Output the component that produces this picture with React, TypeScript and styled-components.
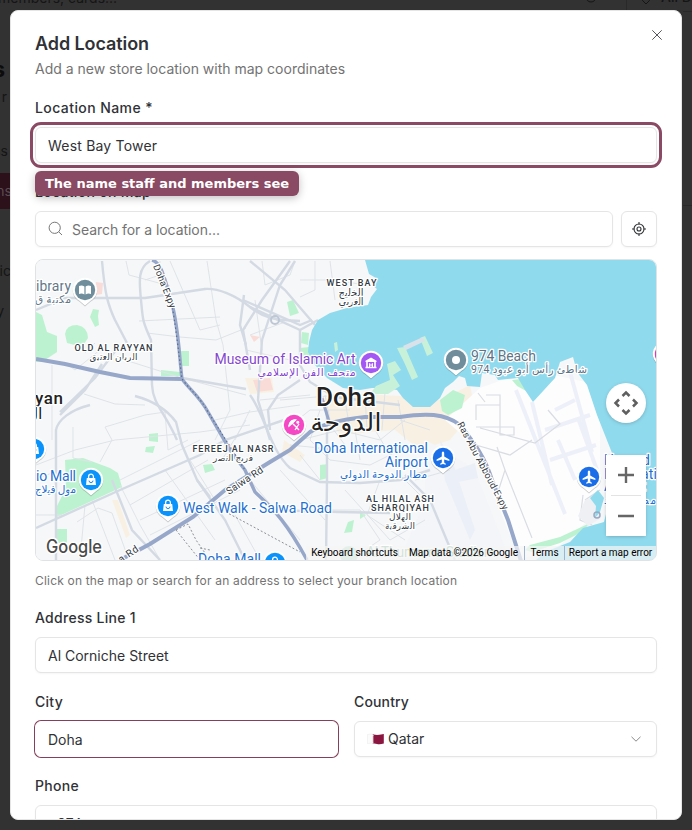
import React from "react";
import styled, { createGlobalStyle, css } from "styled-components";

const GlobalStyle = createGlobalStyle`
  *, *::before, *::after { box-sizing: border-box; }
  body {
    margin: 0;
    overflow: hidden;
    background: #323232;
    color: #303236;
    font-family: Inter, "Noto Sans", sans-serif;
    font-size: 14px;
  }
  input, button { font: inherit; color: inherit; }
`;

const Screen = styled.div`
  position: relative;
  height: 830px;
  padding: 10px;
  overflow: hidden;
`;

const Behind = styled.svg`
  position: absolute;
  inset: 0;
  width: 692px;
  height: 830px;
`;

const Dialog = styled.div`
  position: relative;
  height: 810px;
  padding: 20px 24px 0;
  border: 1px solid #e5e5e5;
  border-radius: 8px;
  background: #fff;
  overflow: hidden;
`;

const CloseButton = styled.button`
  position: absolute;
  top: 16px;
  right: 16px;
  display: flex;
  padding: 0;
  border: 0;
  background: none;
`;

const Title = styled.h2`
  margin: 0;
  font-size: 18px;
  line-height: 25px;
  font-weight: 600;
  letter-spacing: -0.08px;
`;

const Description = styled.p`
  margin: 3px 0 16px;
  line-height: 20px;
  color: #737373;
`;

const Form = styled.div`
  display: flex;
  flex-direction: column;
  gap: 16px;
`;

const Field = styled.div`
  position: relative;
  display: flex;
  flex-direction: column;
  gap: 8px;
`;

const Label = styled.label<{ $spacing?: number }>`
  height: 24px;
  line-height: 25px;
  font-weight: 500;
  letter-spacing: ${(p) => p.$spacing ?? 0.28}px;
`;

const box = css`
  height: 36px;
  border: 1px solid #e5e5e5;
  border-radius: 6px;
  background: #fff;
  box-shadow: 0 1px 2px rgba(0, 0, 0, 0.04);
`;

const TextInput = styled.input<{ $state?: "highlight" | "focus" }>`
  ${box}
  width: 100%;
  padding: 0 12px;
  outline: none;
  ${(p) => p.$state === "highlight" && css`outline: 3px solid #8a4a63; outline-offset: 2px; letter-spacing: 0.2px;`}
  ${(p) => p.$state === "focus" && css`border-color: #fff; box-shadow: 0 0 0 1px #84405a;`}
`;

const Tip = styled.div`
  position: absolute;
  z-index: 2;
  top: 76px;
  left: 0;
  padding: 0 10px;
  border-radius: 6px;
  background: #8a4a63;
  color: #fff;
  font: 600 13px/25px "DejaVu Sans", sans-serif;
  white-space: nowrap;
  box-shadow: 0 2px 8px rgba(0, 0, 0, 0.25);
`;

const SearchRow = styled.div`
  display: flex;
  gap: 8px;
`;

const SearchBox = styled.div`
  ${box}
  flex: 1;
  display: flex;
  align-items: center;
  gap: 8px;
  padding: 0 12px;
  color: #737373;
  letter-spacing: -0.05px;
`;

const IconButton = styled.button`
  ${box}
  display: flex;
  align-items: center;
  justify-content: center;
  width: 36px;
  padding: 0;
`;

const MapFrame = styled.div`
  position: relative;
  height: 302px;
  margin-top: 4px;
  border: 1px solid #e0e3e5;
  border-radius: 8px;
  overflow: hidden;
`;

const MapDrawing = styled.svg`
  display: block;
  width: 620px;
  height: 300px;
`;

const MapFooter = styled.div`
  position: absolute;
  right: 0;
  bottom: 0;
  display: flex;
  height: 14px;
  font: 10px/14px Roboto, sans-serif;
  color: #000;
  background: rgba(245, 245, 245, 0.72);
`;

const FooterItem = styled.span<{ $w: number }>`
  width: ${(p) => p.$w}px;
  text-align: center;
  white-space: nowrap;
  & + & + & { border-left: 1px solid #9fb4d0; }
`;

const PanButton = styled.div`
  position: absolute;
  top: 123px;
  right: 10px;
  width: 40px;
  height: 40px;
  border-radius: 50%;
  background: #fff;
  box-shadow: 0 1px 4px -1px rgba(0, 0, 0, 0.3);
`;

const ZoomControl = styled.div`
  position: absolute;
  top: 195px;
  right: 10px;
  width: 40px;
  height: 81px;
  background: #fff;
  box-shadow: 0 1px 4px -1px rgba(0, 0, 0, 0.3);
`;

const Hint = styled.p`
  margin: -5px 0 -1px;
  font-size: 12px;
  line-height: 18px;
  letter-spacing: 0.185px;
  color: #737373;
`;

const Columns = styled.div`
  display: grid;
  grid-template-columns: 1fr 1fr;
  gap: 16px;
`;

const Select = styled.div`
  ${box}
  display: flex;
  align-items: center;
  gap: 4px;
  padding: 0 12px 1px;
  svg:last-child { margin-left: auto; }
`;

type P = { x: number; y: number };

const Pin = ({ x, y, color, children }: P & { color: string; children?: React.ReactNode }) => (
  <g transform={`translate(${x} ${y})`}>
    <path d="M0 15.5 L-5.5 10.8 A12.2 12.2 0 1 1 5.5 10.8 Z" fill="#0003" transform="translate(0 1)" />
    <path d="M0 15.5 L-5.5 10.8 A12.2 12.2 0 1 1 5.5 10.8 Z" fill="#fff" />
    <circle r="10.2" fill={color} />
    {children}
  </g>
);

const Bag = () => (
  <g>
    <path d="M-4.2-2H4.2L5 5H-5Z" fill="#fff" />
    <path d="M-2.4-2V-3.4A2.4 2.4 0 0 1 2.4-3.4V-2" fill="none" stroke="#fff" strokeWidth="1.3" />
    <path d="M-2 .6A2 2 0 0 0 2 .6" fill="none" stroke="#0a8cf0" strokeWidth="1" />
  </g>
);

const Plane = () => (
  <path d="M0-6.5C.8-6.5 1.2-5.7 1.2-4.8V-1.6L6.4 1.5V3L1.2 1.5V4.4L2.8 5.7V6.7L0 5.9L-2.8 6.7V5.7L-1.2 4.4V1.5L-6.4 3V1.5L-1.2-1.6V-4.8C-1.2-5.7-.8-6.5 0-6.5Z" fill="#fff" />
);

type MapTextProps = P & {
  size: number; w?: number; children: string;
  fill?: string; anchor?: "start" | "middle" | "end"; weight?: number; halo?: number; turn?: number;
};

const MapText = ({ x, y, size, w, children, fill = "#333a44", anchor = "start", weight = 400, halo = 2.5, turn = 0 }: MapTextProps) => (
  <text
    x={x} y={y} fontSize={size} textLength={w} fill={fill} textAnchor={anchor} fontWeight={weight}
    stroke="#fff" strokeWidth={halo} strokeLinejoin="round" paintOrder="stroke"
    transform={turn ? `rotate(${turn} ${x} ${y})` : undefined}
  >
    {children}
  </text>
);

const minorRoads = [
  "M126 261L129 275L170 286", "M170 261L200 330L220 325", "M207 261L216 320L223 345L230 410L215 440",
  "M139 321L220 317", "M147 333L180 337L216 340L246 328", "M160 261V275L145 280", "M52 365V440", "M84 394L115 404L145 405",
  "M95 343L85 353M100 350L75 370L64 362", "M125 360L182 378L246 395", "M36 465L75 450L115 440L200 432L250 425",
  "M36 479L60 470M73 427V458L92 462M105 427L145 415L165 412L168 450L188 440", "M105 427L112 440L100 462",
  "M85 505L80 560M92 500L115 560M36 515H62M77 522L98 508L112 513L127 555", "M120 480L200 440M130 505L208 460M140 520L225 480M150 535L240 490",
  "M165 470L190 505L215 540M190 460L215 500M120 485L140 525L160 560", "M235 515L260 560M250 480L300 540M280 470L325 520",
  "M222 460L240 430L246 420M235 440L250 410M215 420L250 412L300 405", "M246 350L290 360M250 335L285 322M255 300L262 350M262 261L265 285L290 275L295 261",
  "M315 261V290L300 297M330 261L335 300M300 280H335L365 285", "M325 395L330 420M280 400L340 395M310 410L350 410M300 440L340 430L380 440L405 420",
  "M345 400L350 430M365 395L367 430M385 392L382 430M398 400L405 440", "M320 410L310 440L330 460L370 465L400 450",
  "M330 425L345 445M355 430L360 460M375 430L390 455M400 420L430 430", "M325 510H360L380 540L350 560M380 480L367 515L405 540M345 490L390 540L425 520",
  "M415 480L450 470M400 475L420 495", "M290 445L340 450M300 455L320 480M285 430L310 410M260 400L310 395",
];

const streets = [
  "M36 310L65 298L145 298L205 289C218 288 235 295 250 307S275 320 300 321",
  "M102 261C105 295 108 305 115 320L127 343", "M102 364L85 390L60 415M116 350L95 378L60 412",
  "M150 261C138 268 139 280 141 300S142 320 151 340L152 385C153 405 165 412 177 440", "M56 560V430C58 420 70 410 90 405",
  "M135 396C150 400 165 407 176 422L182 445L197 480L210 497", "M250 261L285 290L315 325", "M290 261L262 300L243 330L250 370",
  "M295 261L280 285L262 340", "M243 300L300 325L312 320", "M244 295L240 325L246 345", "M262 340L258 400L270 440",
  "M250 307L300 330L318 320", "M300 330L300 365L310 382L335 397L400 405", "M300 380L278 395L268 410L270 430",
  "M327 410V480L326 560", "M182 378L246 389M250 395C265 415 270 450 290 468L320 482L360 483L400 480L430 470",
  "M270 510L340 512L390 513", "M36 528L120 490L200 455L225 440L290 418", "M112 480L132 530L160 560M197 480L225 520L245 560",
  "M405 475L430 500L455 560",
];

const Sea = () => (
  <path
    fill="#90daee"
    d="M365 260L369 274L376 278L373 286L377 289L371 297L368 305L347 308L330 313L318 320L312 330L309 342L308 352L315 365L327 378L343 388L360 390L372 388L387 388L397 390L403 398L413 407L430 407L440 398L445 388L453 382L459 376L465 378L467 386L480 387L482 373L495 375L498 380L518 378L525 390L533 402L555 378L560 362L573 357L577 372L587 385L597 415L612 453L620 480L616 500L607 510L604 522L583 528L570 542L545 552L535 561H657V260Z"
  />
);

const CityMap = () => (
  <MapDrawing viewBox="36 260 620 300" fontFamily='Roboto, "Noto Sans", "DejaVu Sans", sans-serif'>
    <rect x="36" y="260" width="620" height="300" fill="#f6f7f8" />
    <g fill="#f8f1e3">
      <path d="M318 400L345 393L400 396L440 400L470 385L475 410L450 440L420 450L395 430L340 435Z" />
      <path d="M245 378H272L274 392L250 394ZM284 440L305 455L300 462L282 452ZM112 500L118 500L130 535L126 538Z" />
    </g>
    <path d="M445 420L480 388L530 370L600 385V510L560 545L520 560L500 510L480 450Z" fill="#fdfdfe" />
    <path d="M425 440L445 450L475 470L510 560H400L425 500Z" fill="#f3f5f8" />
    <path d="M455 470L475 463L478 478L458 482ZM440 440L452 460L475 530L470 540L445 480Z" fill="#e9edf6" opacity=".8" />
    <g fill="#bdf2d0">
      <path d="M36 312L42 315L47 332L57 336V352L42 362H36ZM93 309L99 310L98 316L99 325L95 327L90 317Z" />
      <path d="M65 334Q66 325 77 325Q88 327 88 338L84 344L75 345L67 343ZM180 351H189V366H181ZM161 370L180 372V376H161Z" />
      <path d="M65 460L83 458L110 468L118 473L122 487L57 517L56 508L66 488ZM57 529H67V543H57ZM149 434L158 433V442L149 441ZM146 447L155 446L153 453L145 452ZM203 465L212 464L215 470L205 473Z" />
      <path d="M287 302L293 300L299 313L290 316ZM302 332L309 333L308 345L301 343ZM300 348L309 347L312 360L300 362ZM320 465L328 464V478L320 480ZM348 522L354 520L352 532L344 533ZM360 512L366 515L360 519Z" />
      <path d="M440 400L453 390L465 395L462 408L448 415L442 411ZM512 380L520 379L528 392L517 386ZM530 545L560 537L590 523L582 532L560 543L532 552L525 550Z" />
    </g>
    <path d="M253 380L270 378L273 390L257 392ZM96 282L103 283L102 294L95 295ZM250 335L260 337L254 342Z" fill="#f9dcd8" />
    <g stroke="#dfe3e8" strokeWidth="1" fill="none">{minorRoads.map((d) => <path key={d} d={d} />)}</g>
    <g stroke="#d3dae3" strokeWidth="2.4" fill="none">{streets.map((d) => <path key={d} d={d} />)}</g>
    <Sea />
    <g fill="#c8f1da">
      <path d="M334 343L337 342L338 350L335 352ZM397 348L405 347L418 377L412 380L404 362ZM420 338L425 336L433 353L427 356ZM387 364L395 361L401 370L393 375L400 386L388 394H370L376 386L390 380Z" />
      <path d="M403 346L423 337L425 341L406 350Z" fill="#d9e2e9" />
    </g>
    <g fill="none" stroke="#eef0f9" strokeWidth="4">
      <path d="M516 390L565 514M532 402L552 485M570 372L592 452M555 410L575 400M545 430L590 415M550 460L596 445M558 440L575 480M578 418L597 470" />
    </g>
    <g fill="none" stroke="#d9dce2" strokeWidth="1.2">
      <path d="M480 428L535 443L560 424L548 410M500 405V435H514V427H476M486 395H500V405H476V420M476 445L510 455L532 440M505 470L532 538M497 447L505 470L498 492M478 393L485 402M583 495L580 520L592 525M585 500L600 490" />
    </g>
    <path d="M585 500L596 496L601 518L588 526L578 516Z" fill="#eef0f4" />
    <path d="M590 498L596 506L595 518L600 512L604 498L598 490Z" fill="#90daee" />
    <circle cx="597" cy="515" r="3" fill="none" stroke="#9aa8c0" strokeWidth="1.5" />

    <g fill="none" stroke="#97a7c9" strokeWidth="4">
      <path d="M36 359L65 364L100 372L130 378L182 379" />
      <path d="M152 260C160 262 163 272 171 300S179 355 182 379C190 390 200 397 208 412L230 450L245 470L255 492C275 510 288 525 307 560" strokeWidth="3.4" />
      <path d="M120 560L150 544L193 517L225 490L270 462L290 450L310 432C325 423 340 420 365 417L400 417C425 413 445 413 460 425C474 443 484 455 492 480L508 520L521 561" />
      <path d="M322 398L330 425" strokeWidth="3" />
    </g>
    <path d="M171 300C175 320 179 355 182 379C190 390 200 397 208 412L245 470" fill="none" stroke="#5c6f91" strokeWidth="1.2" strokeDasharray="1.5 2.5" />
    <path d="M176 530L188 524L196 540L205 553M176 530L200 560M222 510L250 525L300 552M200 548L210 550" fill="none" stroke="#8b8f96" strokeDasharray="2 2" />
    <circle cx="275" cy="320" r="4" fill="none" stroke="#bdc7d5" strokeWidth="2" />

    <MapText x={71} y={291} size={14} w={35} anchor="end" fill="#5f7889">ibrary</MapText>
    <MapText x={71} y={303} size={10.5} w={36} anchor="end" fill="#5f7889">مكتبة ق</MapText>
    <MapText x={153} y={266} size={9.5} w={46} turn={68}>Doha Expy</MapText>
    <MapText x={351.5} y={286} size={9} w={50} anchor="middle" weight={500}>WEST BAY</MapText>
    <MapText x={351} y={296} size={10} w={25} anchor="middle">الخليج</MapText>
    <MapText x={351} y={305} size={10} w={25} anchor="middle">الغربي</MapText>
    <MapText x={113.5} y={351} size={9} w={78} anchor="middle" weight={500}>OLD AL RAYYAN</MapText>
    <MapText x={113.5} y={360} size={9} w={48} anchor="middle">الريان العتيق</MapText>
    <MapText x={355.5} y={364} size={14} w={141} anchor="end" fill="#8546d0">Museum of Islamic Art</MapText>
    <MapText x={355.5} y={376} size={10.5} w={98} anchor="end" fill="#8546d0">متحف الفن الإسلامي</MapText>
    <MapText x={471} y={361} size={14} w={65} fill="#5c7587">974 Beach</MapText>
    <MapText x={471} y={373} size={10.5} w={116} fill="#5c7587">شاطئ رأس أبو عبود 974</MapText>
    <MapText x={35} y={404} size={17} w={28} weight={500} fill="#222">yan</MapText>
    <MapText x={42.5} y={419} size={16} anchor="end" fill="#222">ال</MapText>
    <MapText x={346} y={406} size={26} w={60} anchor="middle" weight={500} fill="#222">Doha</MapText>
    <MapText x={346} y={431} size={25} w={71} anchor="middle" fill="#222">الدوحة</MapText>
    <MapText x={428} y={453} size={14} w={114} anchor="end" fill="#1f70d0">Doha International</MapText>
    <MapText x={428} y={467} size={14} w={43} anchor="end" fill="#1f70d0">Airport</MapText>
    <MapText x={427} y={478} size={10.5} w={87} anchor="end" fill="#1f70d0">مطار الدوحة الدولي</MapText>
    <MapText x={233} y={452} size={9} w={81} anchor="middle" weight={500}>FEREEJ AL NASR</MapText>
    <MapText x={233} y={461} size={9} w={40} anchor="middle">فريج النصر</MapText>
    <MapText x={76} y={481} size={14} w={40} anchor="end" fill="#1f70d0">io Mall</MapText>
    <MapText x={76} y={493} size={10.5} w={41} anchor="end" fill="#1f70d0">مول فيلاج</MapText>
    <MapText x={229} y={495} size={10} w={42} turn={-34}>Salwa Rd</MapText>
    <MapText x={121} y={563} size={10} w={22} turn={-34}>a Rd</MapText>
    <MapText x={183} y={513} size={14} w={149} fill="#1f70d0">West Walk - Salwa Road</MapText>
    <MapText x={400} y={502} size={9} w={68} anchor="middle" weight={500}>AL HILAL ASH</MapText>
    <MapText x={400} y={511} size={9} w={58} anchor="middle" weight={500}>SHARQIYAH</MapText>
    <MapText x={400} y={520} size={9} w={22} anchor="middle">الهلال</MapText>
    <MapText x={400} y={529} size={9} w={30} anchor="middle">الشرقية</MapText>
    <MapText x={457} y={424} size={9.5} w={98} turn={62}>Ras Abu Abboud Expy</MapText>
    <MapText x={198} y={564} size={14} w={63} fill="#1f70d0">Doha Mall</MapText>
    <MapText x={604} y={465} size={14} w={46} fill="#1f70d0">Hamad</MapText>
    <MapText x={604} y={479} size={14} w={61} fill="#1f70d0">Internatio</MapText>
    <MapText x={604} y={491} size={14} w={42} fill="#1f70d0">Airport</MapText>
    <MapText x={656} y={504} size={10.5} w={52} anchor="end" fill="#1f70d0">مطار حمد</MapText>
    <MapText x={366} y={557} size={14} w={130} fill="#7fb396">Al Thumama Stadium</MapText>

    <Pin x={85} y={290} color="#6f8d9b">
      <path d="M-.6-3.5Q-3-5-6-4V4Q-3 3-.6 4.5ZM.6-3.5Q3-5 6-4V4Q3 3 .6 4.5Z" fill="#fff" />
    </Pin>
    <Pin x={371} y={363} color="#a357f3">
      <path d="M-5.5-2.3L0-5.5L5.5-2.3V-1H-5.5ZM-4.8-1H-3.2V4H-4.8ZM3.2-1H4.8V4H3.2ZM-5.5 3.8H5.5V5.2H-5.5ZM-2 .2H-.8V1.4H.8V.2H2V3.8H.8V2.6H-.8V3.8H-2Z" fill="#fff" />
    </Pin>
    <Pin x={456} y={360} color="#6f8d9b"><circle r="4" fill="#fff" /></Pin>
    <Pin x={294} y={425} color="#f548c4">
      <g fill="none" stroke="#fff" strokeWidth="1.3">
        <path d="M-5 1A6 6 0 0 1 1.5-5L-5 1ZM-1.8-2L5 5M1 5L5-1" />
        <path d="M-5.2 1L-2.5-4L1.5-5.2Z" fill="#fff" />
        <circle cx="3.8" cy="-2.8" r=".9" fill="#fff" />
      </g>
    </Pin>
    <Pin x={443} y={458} color="#1a6ee8"><Plane /></Pin>
    <Pin x={589} y={477} color="#1a6ee8"><Plane /></Pin>
    <Pin x={91} y={480} color="#0a93fb"><Bag /></Pin>
    <Pin x={168} y={506} color="#0a93fb"><Bag /></Pin>
    <Pin x={34} y={449} color="#0a93fb"><Bag /></Pin>
    <Pin x={275} y={563} color="#0a93fb"><Bag /></Pin>
    <Pin x={665} y={354} color="#d93bb2" />
    <circle cx="349" cy="555" r="9" fill="#a5d6bc" opacity=".75" />
    <text x="46" y="553" fontSize="18" fontFamily="Inter, sans-serif" textLength="56" lengthAdjust="spacingAndGlyphs" fill="#4a4a4a" stroke="#fff" strokeWidth="3" paintOrder="stroke" fontWeight="500">Google</text>
  </MapDrawing>
);

const Search = () => (
  <svg width="16" height="16" viewBox="0 0 16 16" fill="none" stroke="#777">
    <circle cx="6.7" cy="6.8" r="5.6" /><path d="M10.7 10.8L14 14" />
  </svg>
);

const Target = () => (
  <svg width="16" height="16" viewBox="0 0 16 16" fill="none" stroke="#303236" strokeWidth="1.1">
    <circle cx="8" cy="8" r="5" /><circle cx="8" cy="8" r="2" />
    <path d="M8 1V3.5M8 12.5V15M1 8H3.5M12.5 8H15" />
  </svg>
);

const Flag = () => (
  <svg width="17" height="12" viewBox="0 0 17 12">
    <path d="M.5 1.5Q4 .5 7 1.5T16.5 1V10.5Q12 11.5 8 10.5T.5 10.8Z" fill="#fbfbfb" stroke="#e9e9e9" strokeWidth=".5" />
    <path d="M5.5 1.2Q8 2 10 2T16.8 1V10.6Q13 11.5 10 11T5.5 10.2L7 9L5.5 8L7 7L5.5 6L7 5L5.5 4L7 3Z" fill="#8b1740" />
  </svg>
);

export default function App() {
  return (
    <Screen>
      <GlobalStyle />
      <Behind fill="#151515" fontFamily="Inter, sans-serif" fontSize="14">
        <text x="-2" y="3">members, cards...</text>
        <text x="5" y="77" textAnchor="end" fontSize="22" fontWeight="700" fill="#0c0c0c">s</text>
        <text x="7" y="102" textAnchor="end">r</text>
        <text x="8" y="156" textAnchor="end">ss</text>
        <rect y="173" width="12" height="36" fill="#2c101a" />
        <text x="12" y="196" textAnchor="end" fill="#5a4b51">ns</text>
        <text x="11" y="276" textAnchor="end">tic</text>
        <text x="4" y="316" textAnchor="end">y</text>
        <path d="M683 205.5H692M626.5 0V10M683 11.5H692" stroke="#292929" />
        <circle cx="591" cy="-3" r="5" fill="none" stroke="#151515" />
        <path d="M641 -3Q642 1 646 4Q650 1 651 -3" fill="none" stroke="#151515" />
        <text x="661" y="2" fontWeight="500">All Bra</text>
      </Behind>
      <Dialog>
        <CloseButton aria-label="Close">
          <svg width="16" height="16" viewBox="0 0 16 16" stroke="#55575a" strokeWidth="1"><path d="M3.3 3.3L12.7 12.7M12.7 3.3L3.3 12.7" /></svg>
        </CloseButton>
        <Title>Add Location</Title>
        <Description>Add a new store location with map coordinates</Description>
        <Form>
          <Field>
            <Label $spacing={0.42}>Location Name *</Label>
            <TextInput $state="highlight" defaultValue="West Bay Tower" />
            <Tip>The name staff and members see</Tip>
          </Field>
          <Field>
            <Label $spacing={0.3}>Location on Map</Label>
            <SearchRow>
              <SearchBox><Search />Search for a location...</SearchBox>
              <IconButton aria-label="Use current position"><Target /></IconButton>
            </SearchRow>
            <MapFrame>
              <CityMap />
              <PanButton>
                <svg width="40" height="40" fill="none" stroke="#5f5f5f" strokeWidth="2.5">
                  <path d="M16.5 13L20 9.5L23.5 13M16.5 27L20 30.5L23.5 27M13 16.5L9.5 20L13 23.5M27 16.5L30.5 20L27 23.5" />
                </svg>
              </PanButton>
              <ZoomControl>
                <svg width="40" height="81" fill="none" stroke="#666" strokeWidth="2.4">
                  <path d="M12 20H28M20 12V28M12 61H28" /><path d="M5 40.5H35" stroke="#e3e3e3" strokeWidth="1" />
                </svg>
              </ZoomControl>
              <MapFooter>
                <FooterItem $w={97}>Keyboard shortcuts</FooterItem>
                <FooterItem $w={121}>Map data ©2026 Google</FooterItem>
                <FooterItem $w={40}>Terms</FooterItem>
                <FooterItem $w={92}>Report a map error</FooterItem>
              </MapFooter>
            </MapFrame>
          </Field>
          <Hint>Click on the map or search for an address to select your branch location</Hint>
          <Field>
            <Label>Address Line 1</Label>
            <TextInput defaultValue="Al Corniche Street" />
          </Field>
          <Columns>
            <Field>
              <Label>City</Label>
              <TextInput $state="focus" defaultValue="Doha" />
            </Field>
            <Field>
              <Label $spacing={0.15}>Country</Label>
              <Select>
                <Flag />Qatar
                <svg width="16" height="16" viewBox="0 0 16 16" fill="none" stroke="#8a8a8a"><path d="M3.5 5.8L8 10.2L12.5 5.8" /></svg>
              </Select>
            </Field>
          </Columns>
          <Field>
            <Label>Phone</Label>
            <TextInput defaultValue="+974" />
          </Field>
        </Form>
      </Dialog>
    </Screen>
  );
}
